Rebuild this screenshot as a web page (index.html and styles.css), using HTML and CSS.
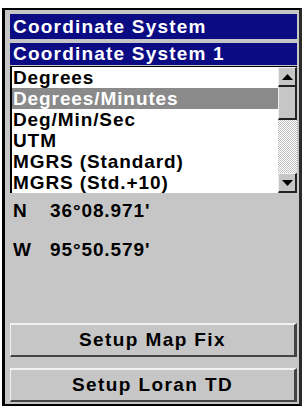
FILE: index.html
```html
<!DOCTYPE html>
<html lang="en">
<head>
  <meta charset="UTF-8">
  <meta name="viewport" content="width=device-width, initial-scale=1.0">
  <title>Coordinate System</title>
  <link rel="stylesheet" href="styles.css">
</head>
<body>
  <div class="screen">
    <div class="bar title">Coordinate System</div>
    <div class="bar subtitle">Coordinate System 1</div>

    <div class="list">
      <ul class="items">
        <li>Degrees</li>
        <li class="selected">Degrees/Minutes</li>
        <li>Deg/Min/Sec</li>
        <li>UTM</li>
        <li>MGRS (Standard)</li>
        <li>MGRS (Std.+10)</li>
      </ul>
      <div class="scrollbar">
        <div class="arrow">
          <svg width="11" height="6" viewBox="0 0 11 6"><polygon points="0,6 11,6 5.5,0" fill="#000"/></svg>
        </div>
        <div class="thumb"></div>
        <div class="track"></div>
        <div class="arrow">
          <svg width="11" height="6" viewBox="0 0 11 6"><polygon points="0,0 11,0 5.5,6" fill="#000"/></svg>
        </div>
      </div>
    </div>

    <div class="coords">
      <div class="coord"><span class="dir">N</span><span>36°08.971'</span></div>
      <div class="coord"><span class="dir">W</span><span>95°50.579'</span></div>
    </div>

    <div class="buttons">
      <div class="btn">Setup Map Fix</div>
      <div class="btn">Setup Loran TD</div>
    </div>
  </div>
</body>
</html>
```

FILE: styles.css
```css
body {
    margin: 0;
    background-color: #ffffff;
    font-family: "Liberation Sans", Arial, sans-serif;
    font-size: 19px;
    font-weight: bold;
    color: #000;
}
.screen {
    margin: 8px 0 0 2px;
    width: 287px;
    height: 390px;
    padding: 4px 2px 0 5px;
    border-style: solid;
    border-color: #000 #2a2a2a #000 #000;
    border-width: 2px 3px 2px 3px;
    background-color: #c6c6c6;
    display: flex;
    flex-direction: column;
}
.bar {
    background-color: #0b0b84;
    color: #fff;
    padding-left: 3px;
    letter-spacing: 1.2px;
    white-space: nowrap;
}
.title {
    height: 25px;
    line-height: 26px;
    margin-bottom: 4px;
}
.subtitle {
    height: 22px;
    line-height: 22px;
    margin-bottom: 1px;
}
.list {
    display: flex;
    height: 126px;
    border-top: 1px solid #000;
    border-left: 2px solid #000;
    background-color: #fff;
}
.items {
    flex: 1;
    list-style: none;
    margin: 0;
    padding: 0;
}
.items li {
    height: 21px;
    line-height: 21px;
    padding-left: 1px;
    letter-spacing: 0.9px;
    white-space: nowrap;
}
.items li.selected {
    background-color: #8a8a8a;
    color: #fff;
}
.scrollbar {
    width: 19px;
    display: flex;
    flex-direction: column;
}
.arrow {
    height: 17px;
    display: flex;
    align-items: center;
    justify-content: center;
    background-color: #c6c6c6;
    border-right: 2px solid #222;
    border-bottom: 2px solid #222;
    border-top: 1px solid #eee;
    border-left: 1px solid #eee;
}
.thumb {
    height: 31px;
    background-color: #c6c6c6;
    border-right: 2px solid #222;
    border-bottom: 2px solid #222;
    border-left: 1px solid #eee;
}
.track {
    flex: 1;
    background: repeating-conic-gradient(#ffffff 0 25%, #c0c0c0 0 50%) 0 0 / 2px 2px;
}
.coords {
    margin-top: 7px;
    display: flex;
    flex-direction: column;
    gap: 17px;
}
.coord {
    height: 22px;
    line-height: 22px;
    padding-left: 3px;
    letter-spacing: 0.9px;
    display: flex;
}
.dir {
    width: 37px;
}
.buttons {
    margin-top: auto;
    margin-bottom: 2px;
    display: flex;
    flex-direction: column;
    gap: 11px;
}
.btn {
    height: 30px;
    line-height: 30px;
    text-align: center;
    letter-spacing: 1.4px;
    border-style: solid;
    border-width: 2px 3px 2px 1px;
    border-color: #f2f2f2 #444 #444 #f2f2f2;
}
```
